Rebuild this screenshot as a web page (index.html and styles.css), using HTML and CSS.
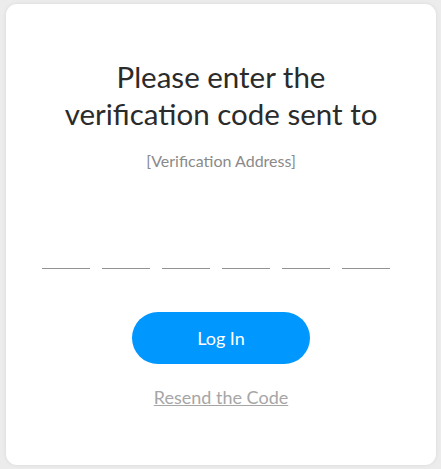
FILE: index.html
```html
<!DOCTYPE html>
<html>
<head>
<meta charset="utf-8">
<link rel="stylesheet" href="styles.css">
</head>
<body>
<div class="card">
  <h1 class="title">Please enter the<br>verification code sent to</h1>
  <p class="address">[Verification Address]</p>
  <div class="code">
    <input class="digit" type="text" maxlength="1">
    <input class="digit" type="text" maxlength="1">
    <input class="digit" type="text" maxlength="1">
    <input class="digit" type="text" maxlength="1">
    <input class="digit" type="text" maxlength="1">
    <input class="digit" type="text" maxlength="1">
  </div>
  <button class="login">Log In</button>
  <a class="resend" href="#">Resend the Code</a>
</div>
</body>
</html>
```
FILE: styles.css
```css
html, body {
  margin: 0;
  padding: 0;
  background: #ececec;
  font-family: Lato, "Open Sans", sans-serif;
}
body {
  padding: 4px 5px 4px 6px;
  height: 469px;
  box-sizing: border-box;
}
.card {
  background: #fff;
  border-radius: 11px;
  height: 461px;
  box-sizing: border-box;
  box-shadow: 0 0 4px rgba(0,0,0,0.08);
  display: flex;
  flex-direction: column;
  align-items: center;
  padding-top: 54px;
}
.title {
  margin: 0;
  font-weight: 400;
  font-size: 29.5px;
  line-height: 37px;
  color: #2b2b2b;
  text-align: center;
}
.address {
  margin: 19px 0 0;
  font-size: 16px;
  line-height: 20px;
  color: #8a8a8a;
}
.code {
  display: flex;
  margin-top: 78px;
  margin-left: 2px;
}
.digit {
  width: 48px;
  height: 20px;
  margin-right: 12px;
  box-sizing: border-box;
  border: none;
  border-bottom: 1px solid #939393;
  padding: 0;
  outline: none;
  font-family: inherit;
  text-align: center;
}
.login {
  margin-top: 43px;
  width: 178px;
  height: 52px;
  border: none;
  border-radius: 26px;
  background: #0097ff;
  color: #fff;
  font-family: inherit;
  font-size: 18px;
  padding: 0;
}
.resend {
  margin-top: 23px;
  font-size: 18px;
  line-height: 20px;
  color: #a6a6a6;
  text-decoration: underline;
}
```
